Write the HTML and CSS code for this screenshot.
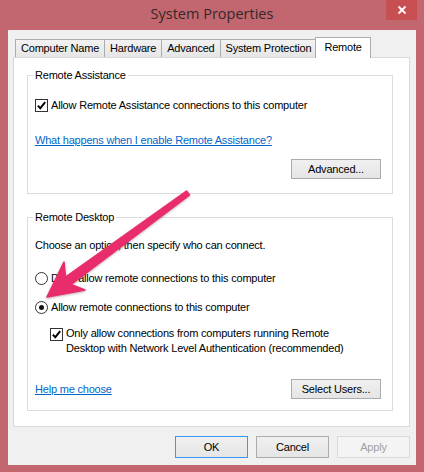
FILE: index.html
```html
<!DOCTYPE html>
<html lang="en">
<head>
<meta charset="utf-8">
<title>System Properties</title>
<link rel="stylesheet" href="styles.css">
</head>
<body>
<div class="window">
  <div class="titlebar">
    <span class="title">System Properties</span>
    <button class="close" aria-label="Close">
      <svg width="10" height="10" viewBox="0 0 10 10"><path d="M1.5 1.5 L8.5 8.5 M8.5 1.5 L1.5 8.5" stroke="#fff" stroke-width="1.8" fill="none"/></svg>
    </button>
  </div>
  <div class="client">
    <div class="tabs">
      <div class="tab">Computer Name</div>
      <div class="tab">Hardware</div>
      <div class="tab">Advanced</div>
      <div class="tab">System Protection</div>
      <div class="tab active">Remote</div>
    </div>
    <div class="panel">
      <fieldset class="group group-assist">
        <legend>Remote Assistance</legend>
        <div class="row check-row">
          <span class="checkbox checked"><svg width="11" height="11" viewBox="0 0 11 11"><path d="M1.8 5.6 L4.3 8.2 L9.2 2.2" stroke="#000" stroke-width="1.9" fill="none"/></svg></span>
          <span>Allow Remote Assistance connections to this computer</span>
        </div>
        <div class="row link-row"><a class="link" href="#">What happens when I enable Remote Assistance?</a></div>
        <div class="row btn-row"><button class="btn wide">Advanced...</button></div>
      </fieldset>
      <fieldset class="group group-desktop">
        <legend>Remote Desktop</legend>
        <div class="row choose-row">Choose an option, then specify who can connect.</div>
        <div class="row radio-row first-radio">
          <span class="radio"></span>
          <span>Don't allow remote connections to this computer</span>
        </div>
        <div class="row radio-row second-radio">
          <span class="radio selected"></span>
          <span>Allow remote connections to this computer</span>
        </div>
        <div class="row nla-row">
          <span class="checkbox checked"><svg width="11" height="11" viewBox="0 0 11 11"><path d="M1.8 5.6 L4.3 8.2 L9.2 2.2" stroke="#000" stroke-width="1.9" fill="none"/></svg></span>
          <span class="nla-text">Only allow connections from computers running Remote<br>Desktop with Network Level Authentication (recommended)</span>
        </div>
        <div class="row help-row">
          <a class="link" href="#">Help me choose</a>
          <button class="btn wide">Select Users...</button>
        </div>
      </fieldset>
    </div>
    <div class="actions">
      <button class="btn default">OK</button>
      <button class="btn">Cancel</button>
      <button class="btn disabled">Apply</button>
    </div>
  </div>
</div>
<svg class="arrow" width="424" height="472" viewBox="0 0 424 472">
  <polygon points="47,297 85,290 71,284.5 189.5,195 186.5,191 65.5,277 64,262" fill="#e92c6c" stroke="#e92c6c" stroke-width="1.5" stroke-linejoin="round"/>
</svg>
</body>
</html>
```

FILE: styles.css
```css
html, body {
  margin: 0;
  padding: 0;
}
body {
  width: 424px;
  height: 472px;
  position: relative;
  overflow: hidden;
  background: #c2666f;
  font-family: "Liberation Sans", Arial, sans-serif;
  font-size: 11px;
  letter-spacing: -0.2px;
  color: #000;
}
.window {
  width: 424px;
  height: 472px;
  box-sizing: border-box;
  padding: 0 8px 7px 8px;
  display: flex;
  flex-direction: column;
  background: #c2666f;
}
.titlebar {
  height: 30px;
  display: grid;
  grid-template-columns: 1fr auto 1fr;
  align-items: start;
}
.title {
  grid-column: 2;
  font-family: "Open Sans", "Noto Sans", sans-serif;
  font-size: 14.5px;
  letter-spacing: 0;
  color: #352829;
  line-height: 20px;
  padding-top: 4px;
}
.close {
  grid-column: 3;
  justify-self: end;
  width: 31px;
  height: 20px;
  border: 0;
  padding: 0;
  margin: 0 -1px 0 0;
  background: #c84f51;
  display: flex;
  align-items: center;
  justify-content: center;
}
.client {
  flex: 1;
  background: #f0f0f0;
  padding: 7px 6px 6px 5px;
  display: flex;
  flex-direction: column;
}
.tabs {
  height: 20px;
  display: flex;
  align-items: flex-end;
  padding-left: 2px;
}
.tab {
  height: 17px;
  line-height: 17px;
  padding: 0 5px;
  border: 1px solid #acacac;
  border-bottom: 0;
  background: linear-gradient(#f2f2f2, #e6e6e6);
  margin-left: -1px;
  white-space: nowrap;
}
.tab:first-child {
  margin-left: 0;
}
.tab.active {
  position: relative;
  z-index: 2;
  height: 20px;
  line-height: 18px;
  background: #fff;
  margin: 0 -2px -1px -2px;
  padding: 0 8px;
}
.panel {
  background: #fff;
  border: 1px solid #d9d9d9;
  padding: 10px 16px 15px 13px;
}
.group {
  margin: 0;
  padding: 0 11px 0 7px;
  border: 1px solid #dcdcdc;
  min-width: 0;
}
.group legend {
  padding: 0 2px;
  margin-left: -2px;
  line-height: 14px;
  height: 14px;
}
.group-assist {
  padding-bottom: 14px;
}
.group-desktop {
  margin-top: 16px;
  padding-bottom: 11px;
}
.row {
  display: flex;
  align-items: center;
  white-space: nowrap;
}
.check-row {
  margin-top: 15px;
  height: 16px;
  gap: 3px;
}
.link-row {
  margin-top: 19px;
  height: 16px;
}
.btn-row {
  margin-top: 11px;
  justify-content: flex-end;
}
.choose-row {
  margin-top: 13px;
  height: 16px;
}
.radio-row {
  height: 16px;
  gap: 3px;
}
.first-radio {
  margin-top: 17px;
}
.second-radio {
  margin-top: 13px;
}
.nla-row {
  margin-top: 11px;
  margin-left: 15px;
  align-items: flex-start;
  gap: 3px;
}
.nla-text {
  line-height: 15px;
}
.nla-row .checkbox {
  margin-top: 2px;
}
.help-row {
  margin-top: 23px;
  justify-content: space-between;
}
.checkbox {
  width: 11px;
  height: 11px;
  border: 1px solid #333;
  background: #fff;
  display: inline-flex;
  flex: none;
}
.radio {
  width: 11px;
  height: 11px;
  border: 1px solid #333;
  border-radius: 50%;
  background: #fff;
  flex: none;
  display: inline-flex;
  align-items: center;
  justify-content: center;
}
.radio.selected::after {
  content: "";
  width: 5px;
  height: 5px;
  border-radius: 50%;
  background: #111;
}
.link {
  color: #0066cc;
  text-decoration: underline;
}
.btn {
  width: 73px;
  height: 22px;
  padding: 0;
  margin: 0;
  border: 1px solid #acacac;
  background: linear-gradient(#f0f0f0, #e5e5e5);
  font-family: "Liberation Sans", Arial, sans-serif;
  font-size: 11px;
  letter-spacing: -0.2px;
  color: #000;
}
.btn.wide {
  width: 90px;
  height: 20px;
}
.btn.default {
  border-color: #3399ff;
}
.btn.disabled {
  border-color: #d9d9d9;
  background: #f4f4f4;
  color: #a0a0a0;
}
.actions {
  margin-top: 9px;
  display: flex;
  justify-content: flex-end;
  gap: 8px;
}
.arrow {
  position: absolute;
  left: 0;
  top: 0;
  pointer-events: none;
  filter: drop-shadow(0.5px 1px 1px rgba(90, 0, 30, 0.35));
}
```
